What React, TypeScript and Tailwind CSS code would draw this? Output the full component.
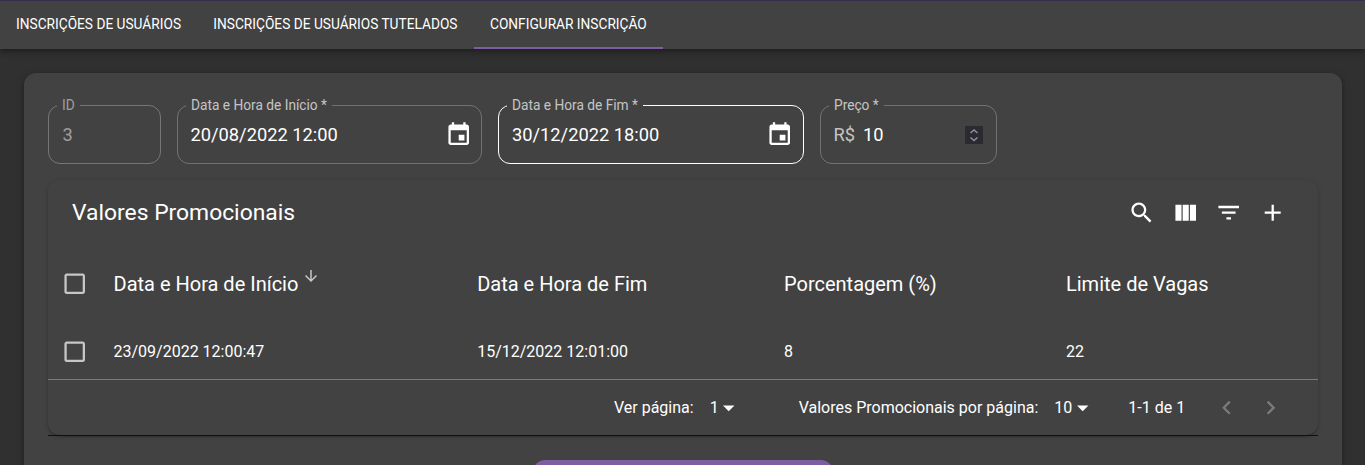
import type { ReactNode } from "react";

const icons = {
  event:
    "M17 12h-5v5h5v-5zM16 1v2H8V1H6v2H5c-1.11 0-1.99.9-1.99 2L3 19c0 1.1.89 2 2 2h14c1.1 0 2-.9 2-2V5c0-1.1-.9-2-2-2h-1V1h-2zm3 18H5V8h14v11z",
  search:
    "M15.5 14h-.79l-.28-.27C15.41 12.59 16 11.11 16 9.5 16 5.91 13.09 3 9.5 3S3 5.91 3 9.5 5.91 16 9.5 16c1.61 0 3.09-.59 4.23-1.57l.27.28v.79l5 4.99L20.49 19l-4.99-5zm-6 0C7.01 14 5 11.99 5 9.5S7.01 5 9.5 5 14 7.01 14 9.5 11.99 14 9.5 14z",
  columns:
    "M14.67 5v14H9.33V5h5.34zm1 14H21V5h-5.33v14zm-7.34 0V5H3v14h5.33z",
  filter: "M10 18h4v-2h-4v2zM3 6v2h18V6H3zm3 7h12v-2H6v2z",
  add: "M19 13h-6v6h-2v-6H5v-2h6V5h2v6h6v2z",
  box: "M19 5v14H5V5h14m0-2H5c-1.1 0-2 .9-2 2v14c0 1.1.9 2 2 2h14c1.1 0 2-.9 2-2V5c0-1.1-.9-2-2-2z",
  down: "M20 12l-1.41-1.41L13 16.17V4h-2v12.17l-5.58-5.59L4 12l8 8 8-8z",
  caret: "M7 10l5 5 5-5z",
  left: "M15.41 7.41L14 6l-6 6 6 6 1.41-1.41L10.83 12z",
  right: "M10 6L8.59 7.41 13.17 12l-4.58 4.59L10 18l6-6z",
};

function Icon({ name, className = "size-[27.43px]" }: { name: keyof typeof icons; className?: string }) {
  return (
    <svg viewBox="0 0 24 24" fill="currentColor" className={`shrink-0 ${className}`}>
      <path d={icons[name]} />
    </svg>
  );
}

function Field({ label, className, children }: { label: string; className: string; children: ReactNode }) {
  return (
    <fieldset className={`h-[67px] min-w-0 rounded-xl border px-2 ${className}`}>
      <legend className="h-4 px-[5px] text-[13.714px] leading-4 whitespace-nowrap text-white/70">{label}</legend>
      <div className="flex h-[43px] items-center pl-[4.5px] text-[18.286px] text-white">{children}</div>
    </fieldset>
  );
}

const grid = "grid grid-cols-[65.5px_363.7px_306.8px_282px_1fr] items-center";

export default function App() {
  return (
    <div className="h-[465px] overflow-hidden bg-[#303030] font-[Roboto,sans-serif] text-white">
      <nav className="relative flex h-[49px] border-t border-[#3a2e4d] bg-[#424242] text-[13.714px] leading-[46px] shadow-[0_2px_4px_-1px_rgba(0,0,0,.2),0_4px_5px_rgba(0,0,0,.14),0_1px_10px_rgba(0,0,0,.12)]">
        <span className="w-[197.300px] pl-4 whitespace-nowrap">INSCRIÇÕES DE USUÁRIOS</span>
        <span className="w-[276.700px] pl-4 whitespace-nowrap">INSCRIÇÕES DE USUÁRIOS TUTELADOS</span>
        <span className="w-[189px] border-b-2 border-[#7b5fa0] pl-4 whitespace-nowrap">CONFIGURAR INSCRIÇÃO</span>
      </nav>
      <main className="mt-6 mr-[23px] ml-6 h-[500px] rounded-xl bg-[#424242] px-6 pt-6 shadow-[0_2px_4px_-1px_rgba(0,0,0,.2),0_4px_5px_rgba(0,0,0,.14),0_1px_10px_rgba(0,0,0,.12)]">
        <div className="flex gap-4">
          <Field label="ID" className="w-[113px] border-white/40 opacity-70">
            <span className="pl-px text-white/70">3</span>
          </Field>
          <Field label="Data e Hora de Início *" className="w-[305px] border-white/25">
            <span className="flex-1">20/08/2022 12:00</span>
            <Icon name="event" className="mr-px size-[27.43px]" />
          </Field>
          <Field label="Data e Hora de Fim *" className="w-[306px] border-white">
            <span className="flex-1 pl-[0.5px]">30/12/2022 18:00</span>
            <Icon name="event" className="mr-[1.5px] size-[27.43px]" />
          </Field>
          <Field label="Preço *" className="w-[177px] border-white/25">
            <span className="mr-2 text-white/70">R$</span>
            <span className="flex-1">10</span>
            <span className="mr-[5px] flex h-[18px] w-[18px] items-center justify-center bg-[#2b2a33] text-[#8f8f9d]">
              <svg viewBox="0 0 18 18" className="size-[18px]" fill="none" stroke="currentColor" strokeWidth="1.5">
                <path d="M5.500 7L9 4l3.500 3M5.500 11.500l3.500 3 3.500-3" />
              </svg>
            </span>
          </Field>
        </div>
        <section className="mt-4 h-[255px] rounded-xl bg-[#424242] shadow-[0_3px_1px_-2px_rgba(0,0,0,.2),0_2px_2px_rgba(0,0,0,.14),0_1px_5px_rgba(0,0,0,.12)]">
          <div className="flex h-[65px] items-center gap-4 pr-8 pl-6">
            <h2 className="flex-1 pt-px text-[22.857px]">Valores Promocionais</h2>
            <Icon name="search" />
            <Icon name="columns" />
            <Icon name="filter" />
            <Icon name="add" />
          </div>
          <div className={`${grid} h-[79px] pb-[2px] text-[20px]`}>
            <span className="pl-[13px] text-white/70"><Icon name="box" /></span>
            <span className="flex">
              Data e Hora de Início
              <Icon name="down" className="-mt-[2px] ml-[4px] size-[18px] text-white/70" />
            </span>
            <span>Data e Hora de Fim</span>
            <span>Porcentagem (%)</span>
            <span>Limite de Vagas</span>
          </div>
          <div className={`${grid} h-14 border-b border-white/30 text-[16px]`}>
            <span className="pl-[13px] text-white/70"><Icon name="box" /></span>
            <span>23/09/2022 12:00:47</span>
            <span>15/12/2022 12:01:00</span>
            <span>8</span>
            <span>22</span>
          </div>
          <div className="flex h-14 items-center justify-end border-b border-[#111] pr-[34px] text-[16px]">
            <span>Ver página:</span>
            <span className="ml-4">1</span>
            <Icon name="caret" className="-ml-[3.43px] size-[27.43px]" />
            <span className="ml-[56px]">Valores Promocionais por página:</span>
            <span className="ml-4">10</span>
            <Icon name="caret" className="-ml-[3.43px] size-[27.43px]" />
            <span className="ml-8">1-1 de 1</span>
            <Icon name="left" className="ml-7 size-[27.43px] text-white/30" />
            <Icon name="right" className="ml-4 size-[27.43px] text-white/30" />
          </div>
        </section>
        <div className="mx-auto mt-[25px] h-12 w-[300px] rounded-xl bg-[#7b5fa0]" />
      </main>
    </div>
  );
}
